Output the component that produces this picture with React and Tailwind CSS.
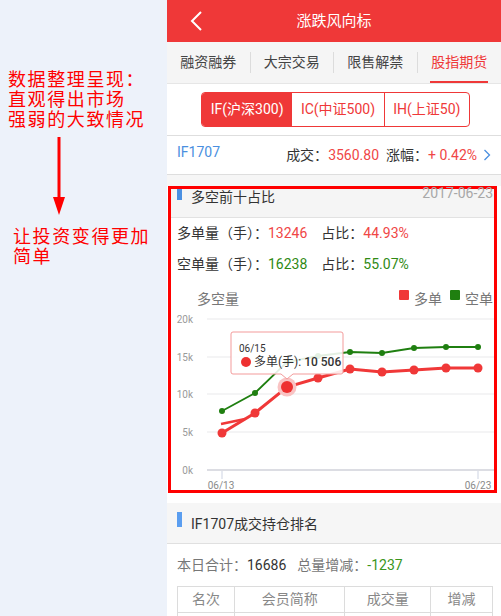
// Market direction page for index futures, with annotation notes on the left.
const FONT = { fontFamily: 'Roboto, "Noto Sans CJK SC", sans-serif' };

const RED_PTS = [
  [222, 433], [255, 413], [287, 387], [318, 378], [350, 369],
  [382, 372], [414, 370], [446, 368], [478, 368]
];
const GREEN_PTS = [
  [222, 411], [255, 393], [287, 362], [318, 356], [350, 352],
  [382, 353], [414, 348], [446, 347], [478, 347]
];
const GRID = [
  { y: 319, label: "20k" },
  { y: 357, label: "15k" },
  { y: 394, label: "10k" },
  { y: 432, label: "5k" },
  { y: 470, label: "0k" }
];

function toPath(pts) {
  return pts.map(([x, y], i) => `${i ? "L" : "M"}${x} ${y}`).join(" ");
}

function Chart() {
  return (
    <svg width="323" height="179" viewBox="171 311 323 179" className="block overflow-visible shrink-0">
      {GRID.map((g) => (
        <g key={g.label}>
          <line
            x1="207"
            x2="494"
            y1={g.y}
            y2={g.y}
            stroke={g.y === 470 ? "#dcdde3" : "#e9e9ec"}
            strokeWidth={g.y === 470 ? 2 : 1.2}
          />
          <text x="193" y={g.y + 4} textAnchor="end" fontSize="10" fill="#9a9a9a">
            {g.label}
          </text>
        </g>
      ))}
      <line x1="222" x2="222" y1="471" y2="479" stroke="#cdd3e2" />
      <line x1="478" x2="478" y1="471" y2="479" stroke="#cdd3e2" />
      <text x="221" y="489" textAnchor="middle" fontSize="10" fill="#8a8a8a">06/13</text>
      <text x="478" y="489" textAnchor="middle" fontSize="10" fill="#8a8a8a">06/23</text>

      <path d={toPath(GREEN_PTS)} fill="none" stroke="#1f7f10" strokeWidth="1.8" />
      {GREEN_PTS.map(([x, y]) => (
        <circle key={x} cx={x} cy={y} r="3" fill="#1f7f10" />
      ))}

      <path d={toPath(RED_PTS)} fill="none" stroke="#f03838" strokeWidth="3" />
      <path d="M221 424 L245 419" stroke="#f03838" strokeWidth="2.5" />
      {RED_PTS.map(([x, y]) => (
        <circle key={x} cx={x} cy={y} r="4.5" fill="#f03838" />
      ))}
      <circle cx="287" cy="387" r="9.5" fill="#f9c3c3" />
      <circle cx="287" cy="387" r="6" fill="#ee3030" />

      {/* tooltip */}
      <path
        d="M233 332 H341 Q343 332 343 334 V372 Q343 374 341 374 H293 L287 379 L281 374 H233 Q231 374 231 372 V334 Q231 332 233 332 Z"
        fill="#ffffff"
        fillOpacity="0.88"
        stroke="#f39b9b"
        strokeWidth="1"
      />
      <text x="239" y="352" fontSize="10" fill="#333">06/15</text>
      <circle cx="246" cy="362" r="5" fill="#ee3030" />
      <text x="254" y="366" fontSize="12" fill="#333">
        多单(手): <tspan fontWeight="500">10 506</tspan>
      </text>
    </svg>
  );
}

export default function App() {
  return (
    <div className="flex w-[501px] h-[616px] overflow-hidden" style={FONT}>
      {/* annotation column */}
      <div className="w-[167px] shrink-0 bg-[#edf2fa] text-[#ff0000] text-[18px] leading-[20px] tracking-[1.6px]">
        <div className="mt-[70px] pl-[8px]">
          <div>数据整理呈现：</div>
          <div>直观得出市场</div>
          <div>强弱的大致情况</div>
        </div>
        <svg width="14" height="78" viewBox="0 0 14 78" className="block mt-[7px] ml-[52px]">
          <line x1="7" y1="0" x2="7" y2="62" stroke="#ff0000" strokeWidth="3" />
          <polygon points="1,60 13,60 7,78" fill="#ff0000" />
        </svg>
        <div className="mt-[12px] pl-[13px]">
          <div>让投资变得更加</div>
          <div>简单</div>
        </div>
      </div>

      {/* phone screen */}
      <div className="w-[334px] shrink-0 bg-white overflow-hidden">
        <div className="h-[42px] bg-[#ef3838] flex items-center relative">
          <svg width="14" height="22" viewBox="0 0 14 22" className="ml-[23px]">
            <path d="M11 2 L2 11 L11 20" fill="none" stroke="#fff" strokeWidth="2" />
          </svg>
          <div className="absolute inset-0 flex items-center justify-center text-white text-[15px]">
            涨跌风向标
          </div>
        </div>

        <div className="h-[42px] bg-[#f5f5f5] border-b border-[#e6e6e6] grid grid-cols-4 text-[14px] text-[#444]">
          <div className="flex items-center justify-center border-r border-[#dcdcdc] my-[10px]">融资融券</div>
          <div className="flex items-center justify-center border-r border-[#dcdcdc] my-[10px]">大宗交易</div>
          <div className="flex items-center justify-center border-r border-[#dcdcdc] my-[10px]">限售解禁</div>
          <div className="flex items-center justify-center">
            <div className="h-full flex items-center border-b-2 border-[#ef3838] text-[#ef3838] pt-[2px] px-[1px]">
              股指期货
            </div>
          </div>
        </div>

        <div className="h-[52px] border-b border-[#dedede] pt-[8px] pl-[34px]">
          <div className="flex h-[35px] w-[269px] rounded-[4px] border border-[#ef3838] overflow-hidden text-[14px]">
            <div className="w-[91px] bg-[#ef3838] text-white flex items-center justify-center">IF(沪深300)</div>
            <div className="w-[93px] text-[#ef3838] flex items-center justify-center border-r border-[#ef3838]">IC(中证500)</div>
            <div className="w-[85px] text-[#ef3838] flex items-center justify-center">IH(上证50)</div>
          </div>
        </div>

        <div className="h-[39px] border-b border-[#dedede] flex items-center pl-[10px] pr-[10px] text-[14px] text-[#333]">
          <span className="text-[#4a8fe0] -mt-[6px]">IF1707</span>
          <span className="ml-auto">成交：</span>
          <span className="text-[#f04646]">3560.80</span>
          <span className="ml-[7px]">涨幅：</span>
          <span className="text-[#f04646]">+ 0.42%</span>
          <svg width="8" height="12" viewBox="0 0 8 12" className="ml-[6px]">
            <path d="M1.5 1 L6.5 6 L1.5 11" fill="none" stroke="#4a8fe0" strokeWidth="1.3" />
          </svg>
        </div>

        <div className="h-[11px] bg-[#f6f6f6]" />

        {/* highlighted card */}
        <div className="ml-[1px] mr-[4px] h-[307px] border-[3px] border-[#ff0000]">
          <div className="h-[29px] bg-[#f5f5f5] border-b border-[#e2e2e2] flex items-start pl-[6px] pr-[1px]">
            <div className="w-[5px] h-[11px] bg-[#4a90e2]" />
            <div className="ml-[9px] text-[14px] leading-[16px] text-[#333]">多空前十占比</div>
            <div className="ml-auto -mt-[4px] text-[14px] leading-[16px] text-[#a8a8a8]">2017-06-23</div>
          </div>
          <div className="h-[31px] flex items-center pl-[6px] text-[14px] text-[#333]">
            <span>多单量（手）：</span>
            <span className="text-[#f04646]">13246</span>
            <span className="ml-[14px]">占比：</span>
            <span className="text-[#f04646]">44.93%</span>
          </div>
          <div className="h-[30px] flex items-center pl-[6px] text-[14px] text-[#333]">
            <span>空单量（手）：</span>
            <span className="text-[#2f8a14]">16238</span>
            <span className="ml-[14px]">占比：</span>
            <span className="text-[#2f8a14]">55.07%</span>
          </div>
          <div className="h-[32px] flex items-start pl-[26px] pr-[1px] text-[14px] leading-[16px] text-[#777]">
            <span className="mt-[12px]">多空量</span>
            <span className="ml-auto mt-[11px] w-[10px] h-[10px] rounded-[1px] bg-[#f03838]" />
            <span className="ml-[5px] mt-[12px]">多单</span>
            <span className="ml-[8px] mt-[11px] w-[10px] h-[10px] rounded-[1px] bg-[#1f7f10]" />
            <span className="ml-[5px] mt-[12px]">空单</span>
          </div>
          <Chart />
        </div>

        <div className="h-[10px]" />

        <div className="h-[41px] bg-[#f6f6f6] border-b border-[#e0e0e0] flex items-start pl-[10px]">
          <div className="mt-[9px] w-[5px] h-[15px] bg-[#5b9ef0]" />
          <div className="ml-[9px] mt-[12px] text-[14px] leading-[18px] text-[#333]">IF1707成交持仓排名</div>
        </div>

        <div className="h-[42px] flex items-center pl-[10px] text-[14px] text-[#777]">
          <span>本日合计：</span>
          <span className="text-[#333]">16686</span>
          <span className="ml-[11px]">总量增减：</span>
          <span className="text-[#3a961c]">-1237</span>
        </div>

        <div className="ml-[10px] w-[316px] border-t border-l border-[#dcdcdc] text-[14px] text-[#888]">
          <div className="flex h-[26px]">
            <div className="w-[57px] border-r border-b border-[#dcdcdc] flex items-center justify-center">名次</div>
            <div className="w-[111px] border-r border-b border-[#dcdcdc] flex items-center justify-center">会员简称</div>
            <div className="w-[86px] border-r border-b border-[#dcdcdc] flex items-center justify-center">成交量</div>
            <div className="w-[62px] border-r border-b border-[#dcdcdc] flex items-center justify-center">增减</div>
          </div>
          <div className="flex h-[26px]">
            <div className="w-[57px] border-r border-[#dcdcdc]" />
            <div className="w-[111px] border-r border-[#dcdcdc]" />
            <div className="w-[86px] border-r border-[#dcdcdc]" />
            <div className="w-[62px] border-r border-[#dcdcdc]" />
          </div>
        </div>
      </div>
    </div>
  );
}
